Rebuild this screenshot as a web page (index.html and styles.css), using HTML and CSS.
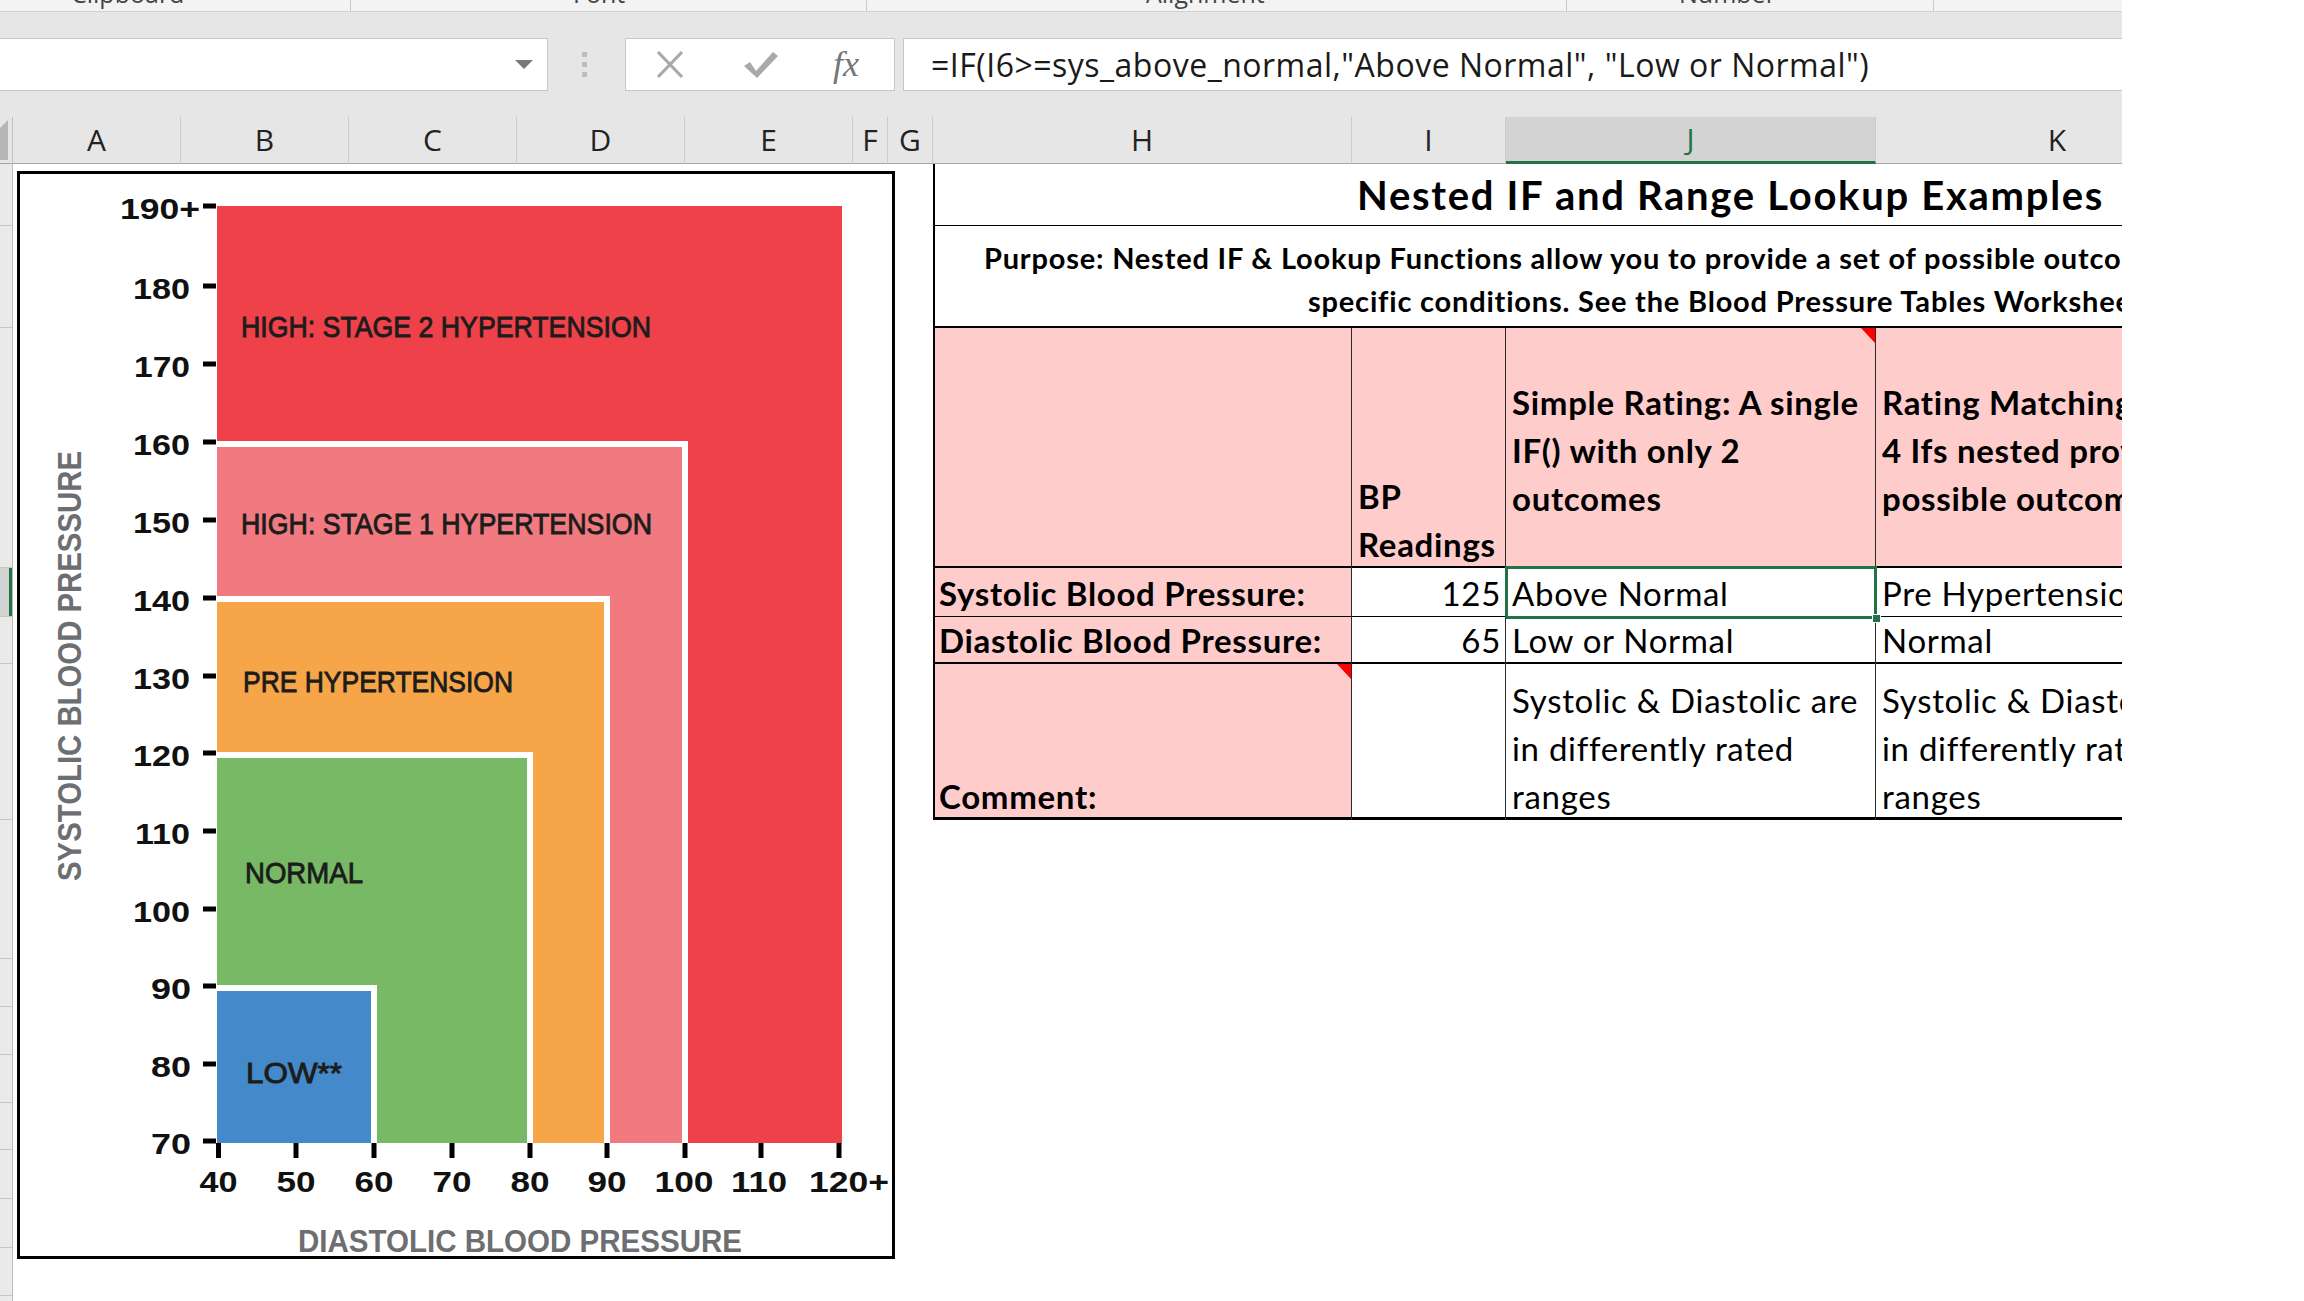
FILE: index.html
```html
<!DOCTYPE html>
<html lang="en">
<head>
<meta charset="utf-8">
<title>Nested IF and Range Lookup Examples</title>
<link rel="stylesheet" href="styles.css">
</head>
<body>
<div class="app">
  <div class="ribbon">
    <div class="rgroup rg1"><span class="rlabel">Clipboard</span></div>
    <div class="rgroup rg2"><span class="rlabel">Font</span></div>
    <div class="rgroup rg3"><span class="rlabel">Alignment</span></div>
    <div class="rgroup rg4"><span class="rlabel">Number</span></div>
  </div>

  <div class="fbar">
    <div class="namebox">
      <svg class="ddarrow" width="18" height="9" viewBox="0 0 18 9"><polygon points="0,0 18,0 9,9" fill="#7a7a7a"/></svg>
    </div>
    <svg class="vdots" width="8" height="53" viewBox="0 0 8 53"><rect x="1" y="14" width="5" height="5" fill="#bdbdbd"/><rect x="1" y="24" width="5" height="5" fill="#bdbdbd"/><rect x="1" y="34" width="5" height="5" fill="#bdbdbd"/></svg>
    <div class="fxbtns">
      <svg width="268" height="51" viewBox="0 0 268 51">
        <path d="M32 13 L56 38 M56 13 L32 38" stroke="#a9a9a9" stroke-width="3.2" fill="none"/>
        <path d="M118 27 L124 23 L130 32 L147 13 L152 17 L131 39 Z" fill="#a9a9a9"/>
        <text x="207" y="37" class="fxtext">fx</text>
      </svg>
    </div>
    <div class="formula">=IF(I6&gt;=sys_above_normal,"Above Normal", "Low or Normal")</div>
  </div>

  <div class="colhead">
    <div class="corner">
      <svg width="12" height="47" viewBox="0 0 12 47"><polygon points="0,11 8,3 8,43 0,43" fill="#b6b6b6"/></svg>
    </div>
    <div class="col w-a">A</div>
    <div class="col w-a">B</div>
    <div class="col w-a">C</div>
    <div class="col w-a">D</div>
    <div class="col w-a">E</div>
    <div class="col w-f">F</div>
    <div class="col w-g">G</div>
    <div class="col w-h">H</div>
    <div class="col w-i">I</div>
    <div class="col w-j active">J</div>
    <div class="col w-k">K</div>
  </div>

  <div class="body">
    <div class="rowhead">
      <div class="rh r62"></div>
      <div class="rh r102"></div>
      <div class="rh r240"></div>
      <div class="rh r49 rsel"></div>
      <div class="rh r47"></div>
      <div class="rh r156"></div>
      <div class="rh r139"></div>
      <div class="rh r48"></div>
      <div class="rh r48"></div>
      <div class="rh r48"></div>
      <div class="rh r47"></div>
      <div class="rh r49"></div>
      <div class="rh r49"></div>
      <div class="rh r48"></div>
      <div class="rh r48"></div>
    </div>

    <div class="grid">
      <div class="spacer"></div>

      <div class="table">
        <div class="c title b1">Nested IF and Range Lookup Examples</div>
        <div class="c purpose b2">
          <span class="pl1">Purpose: Nested IF &amp; Lookup Functions allow you to provide a set of possible outcomes based on</span>
          <span class="pl2">specific conditions. See the Blood Pressure Tables Worksheet for details.</span>
        </div>

        <div class="c h pink vr b2"></div>
        <div class="c pink vr b2 bold">BP<br>Readings</div>
        <div class="c pink vr b2 bold mid cmt">Simple Rating: A single<br>IF() with only 2<br>outcomes</div>
        <div class="c pink b2 bold mid">Rating Matching<br>4 Ifs nested provide 5<br>possible outcomes</div>

        <div class="c h pink vr b1 bold">Systolic Blood Pressure:</div>
        <div class="c vr b1 num">125</div>
        <div class="c vr b1 selcell">Above Normal<span class="handle"></span></div>
        <div class="c b1">Pre Hypertension</div>

        <div class="c h pink vr b2 bold">Diastolic Blood Pressure:</div>
        <div class="c vr b2 num">65</div>
        <div class="c vr b2">Low or Normal</div>
        <div class="c b2">Normal</div>

        <div class="c h pink vr b3 bold cmt">Comment:</div>
        <div class="c vr b3"></div>
        <div class="c vr b3">Systolic &amp; Diastolic are<br>in differently rated<br>ranges</div>
        <div class="c b3">Systolic &amp; Diastolic are<br>in differently rated<br>ranges</div>
      </div>

      <div class="chart">
        <svg width="872" height="1082" viewBox="20 174 872 1082">
          <rect x="217" y="206" width="625" height="937" fill="#ee414a"/>

          <rect x="217" y="441" width="468" height="702" fill="#f07a7f"/>
          <rect x="217" y="441" width="471" height="6" fill="#fff"/>
          <rect x="682" y="441" width="6" height="702" fill="#fff"/>

          <rect x="217" y="596" width="390" height="547" fill="#f6a649"/>
          <rect x="217" y="596" width="393" height="6" fill="#fff"/>
          <rect x="604" y="596" width="6" height="547" fill="#fff"/>

          <rect x="217" y="752" width="313" height="391" fill="#77b964"/>
          <rect x="217" y="752" width="316" height="6" fill="#fff"/>
          <rect x="527" y="752" width="6" height="391" fill="#fff"/>

          <rect x="217" y="985" width="157" height="158" fill="#4489c9"/>
          <rect x="217" y="985" width="160" height="6" fill="#fff"/>
          <rect x="371" y="985" width="6" height="158" fill="#fff"/>

          <g class="zone">
            <text x="241" y="337" textLength="410" lengthAdjust="spacingAndGlyphs">HIGH: STAGE 2 HYPERTENSION</text>
            <text x="241" y="534" textLength="411" lengthAdjust="spacingAndGlyphs">HIGH: STAGE 1 HYPERTENSION</text>
            <text x="243" y="692" textLength="270" lengthAdjust="spacingAndGlyphs">PRE HYPERTENSION</text>
            <text x="245" y="883" textLength="118" lengthAdjust="spacingAndGlyphs">NORMAL</text>
            <text x="246" y="1083" textLength="96" lengthAdjust="spacingAndGlyphs">LOW**</text>
          </g>

          <g fill="#000">
            <rect x="203" y="203.5" width="13" height="5"/>
            <rect x="203" y="283.5" width="13" height="5"/>
            <rect x="203" y="361.5" width="13" height="5"/>
            <rect x="203" y="439.5" width="13" height="5"/>
            <rect x="203" y="517.5" width="13" height="5"/>
            <rect x="203" y="595.5" width="13" height="5"/>
            <rect x="203" y="673.5" width="13" height="5"/>
            <rect x="203" y="750.5" width="13" height="5"/>
            <rect x="203" y="828.5" width="13" height="5"/>
            <rect x="203" y="906.5" width="13" height="5"/>
            <rect x="203" y="983.5" width="13" height="5"/>
            <rect x="203" y="1061.5" width="13" height="5"/>
            <rect x="203" y="1138.5" width="13" height="5"/>

            <rect x="216" y="1143" width="5" height="15"/>
            <rect x="293.5" y="1143" width="5" height="15"/>
            <rect x="371.5" y="1143" width="5" height="15"/>
            <rect x="449.5" y="1143" width="5" height="15"/>
            <rect x="527.5" y="1143" width="5" height="15"/>
            <rect x="604.5" y="1143" width="5" height="15"/>
            <rect x="682.5" y="1143" width="5" height="15"/>
            <rect x="758.5" y="1143" width="5" height="15"/>
            <rect x="836.5" y="1143" width="5" height="15"/>
          </g>

          <g class="ylab">
            <text x="200" y="219" textLength="80" lengthAdjust="spacingAndGlyphs">190+</text>
            <text x="190" y="299" textLength="57" lengthAdjust="spacingAndGlyphs">180</text>
            <text x="190" y="377" textLength="56" lengthAdjust="spacingAndGlyphs">170</text>
            <text x="190" y="455" textLength="57" lengthAdjust="spacingAndGlyphs">160</text>
            <text x="190" y="533" textLength="57" lengthAdjust="spacingAndGlyphs">150</text>
            <text x="190" y="611" textLength="57" lengthAdjust="spacingAndGlyphs">140</text>
            <text x="190" y="689" textLength="57" lengthAdjust="spacingAndGlyphs">130</text>
            <text x="190" y="766" textLength="57" lengthAdjust="spacingAndGlyphs">120</text>
            <text x="190" y="844" textLength="55" lengthAdjust="spacingAndGlyphs">110</text>
            <text x="190" y="922" textLength="57" lengthAdjust="spacingAndGlyphs">100</text>
            <text x="191" y="999" textLength="40" lengthAdjust="spacingAndGlyphs">90</text>
            <text x="191" y="1077" textLength="40" lengthAdjust="spacingAndGlyphs">80</text>
            <text x="191" y="1154" textLength="40" lengthAdjust="spacingAndGlyphs">70</text>
          </g>

          <g class="xlab">
            <text x="218.5" y="1192" textLength="38" lengthAdjust="spacingAndGlyphs">40</text>
            <text x="296" y="1192" textLength="39" lengthAdjust="spacingAndGlyphs">50</text>
            <text x="374" y="1192" textLength="39" lengthAdjust="spacingAndGlyphs">60</text>
            <text x="452" y="1192" textLength="39" lengthAdjust="spacingAndGlyphs">70</text>
            <text x="530" y="1192" textLength="39" lengthAdjust="spacingAndGlyphs">80</text>
            <text x="607" y="1192" textLength="39" lengthAdjust="spacingAndGlyphs">90</text>
            <text x="684" y="1192" textLength="59" lengthAdjust="spacingAndGlyphs">100</text>
            <text x="759" y="1192" textLength="56" lengthAdjust="spacingAndGlyphs">110</text>
          </g>
          <text class="xlab-start" x="809" y="1192" textLength="80" lengthAdjust="spacingAndGlyphs">120+</text>

          <text class="axis" x="298" y="1252" textLength="444" lengthAdjust="spacingAndGlyphs">DIASTOLIC BLOOD PRESSURE</text>
          <text class="axis axis-v" x="-881" y="81" transform="rotate(-90)" textLength="430" lengthAdjust="spacingAndGlyphs">SYSTOLIC BLOOD PRESSURE</text>
        </svg>
      </div>
    </div>
  </div>
</div>
</body>
</html>
```

FILE: styles.css
```css
* { box-sizing: border-box; }
html, body { margin: 0; padding: 0; background: #ffffff; }
body { width: 2304px; height: 1301px; overflow: hidden; font-family: "Open Sans", "Liberation Sans", sans-serif; }

.app { width: 2122px; height: 1301px; overflow: hidden; background: #ffffff; }

/* ribbon remnants */
.ribbon { height: 12px; background: #f3f3f3; border-bottom: 1px solid #d1d1d1; display: flex; overflow: hidden; }
.rgroup { height: 11px; flex: none; overflow: hidden; border-right: 1px solid #c9c9c9; }
.rg1 { width: 351px; padding-left: 71px; }
.rg2 { width: 516px; padding-left: 222px; }
.rg3 { width: 700px; padding-left: 279px; }
.rg4 { width: 367px; padding-left: 112px; }
.rlabel { display: block; font-size: 25px; line-height: 25px; margin-top: -19px; color: #444; white-space: nowrap; }

/* formula bar */
.fbar { height: 105px; background: #e6e6e6; display: flex; align-items: flex-start; padding-top: 26px; }
.namebox { width: 548px; height: 53px; flex: none; background: #ffffff; border: 1px solid #c6c6c6; border-left: 0; display: flex; align-items: center; justify-content: flex-end; padding-right: 14px; }
.ddarrow { display: block; }
.vdots { display: block; flex: none; margin-left: 33px; }
.fxbtns { width: 270px; height: 53px; flex: none; margin-left: 36px; background: #ffffff; border: 1px solid #c6c6c6; }
.fxbtns svg { display: block; }
.fxtext { font-family: "Liberation Serif", serif; font-style: italic; font-size: 36px; fill: #767676; }
.formula { flex: 1; height: 53px; margin-left: 8px; background: #ffffff; border: 1px solid #c6c6c6; border-right: 0; padding-left: 27px; font-size: 32px; letter-spacing: 0.5px; line-height: 52px; color: #1a1a1a; white-space: nowrap; overflow: hidden; }

/* column header */
.colhead { height: 47px; background: #e6e6e6; display: flex; }
.corner { width: 13px; flex: none; border-right: 1px solid #c0c0c0; border-bottom: 1px solid #a6a6a6; }
.corner svg { display: block; }
.col { flex: none; height: 47px; border-right: 1px solid #cbcbcb; border-bottom: 1px solid #a6a6a6; text-align: center; font-size: 30px; line-height: 46px; color: #222; }
.w-a { width: 168px; }
.w-f { width: 35px; }
.w-g { width: 45px; }
.w-h { width: 419px; }
.w-i { width: 154px; }
.w-j { width: 370px; }
.w-k { width: 362px; border-right: 0; }
.col.active { background: #d3d3d3; color: #217346; border-bottom: 3px solid #217346; line-height: 44px; }

/* body */
.body { display: flex; height: 1137px; }
.rowhead { width: 13px; flex: none; background: #eaeaea; border-right: 1px solid #bdbdbd; }
.rh { border-bottom: 1px solid #c6c6c6; }
.r62 { height: 62px; }
.r102 { height: 102px; }
.r240 { height: 240px; }
.r49 { height: 49px; }
.r47 { height: 47px; }
.r48 { height: 48px; }
.r156 { height: 156px; }
.r139 { height: 139px; }
.rsel { background: #d3d3d3; box-shadow: inset -3px 0 0 #217346; }

.grid { flex: 1; position: relative; display: flex; align-items: flex-start; }
.spacer { width: 920px; flex: none; }

/* data table */
.table { flex: none; display: grid; grid-template-columns: 419px 154px 370px 362px; grid-template-rows: 62px 102px 240px 49px 47px 156px; font-family: Lato, "Open Sans", sans-serif; font-size: 33px; letter-spacing: 0.7px; line-height: 48px; color: #000; }
.c { position: relative; display: flex; flex-direction: column; justify-content: flex-end; padding: 0 6px; white-space: nowrap; }
.h { border-left: 2px solid #000; padding-left: 4px; }
.vr { border-right: 1px solid #2b2b2b; }
.pink { background: #ffcccc; }
.b1 { box-shadow: inset 0 -1px 0 #000; }
.b2 { box-shadow: inset 0 -2px 0 #000; }
.b3 { box-shadow: inset 0 -3px 0 #000; }
.bold { font-weight: 700; }
.mid { justify-content: center; padding-top: 4px; }
.num { text-align: right; padding-right: 4px; }

.title { grid-column: 1 / -1; border-left: 2px solid #000; justify-content: flex-start; padding-left: 422px; font-weight: 700; font-size: 40px; letter-spacing: 1.7px; line-height: 62px; }
.purpose { grid-column: 1 / -1; border-left: 2px solid #000; justify-content: flex-start; padding: 10px 0 0 0; font-weight: 700; font-size: 29px; letter-spacing: 0.8px; line-height: 43px; }
.pl1 { display: block; padding-left: 49px; }
.pl2 { display: block; padding-left: 373px; }

.cmt::before { content: ""; position: absolute; top: 0; right: 0; width: 14px; height: 15px; background: #ff0000; clip-path: polygon(0 0, 100% 0, 100% 100%); }

.selcell::after { content: ""; position: absolute; left: -1px; top: -2px; right: -2px; bottom: -2px; border: 3px solid #217346; }
.handle { position: absolute; right: -6px; bottom: -6px; width: 9px; height: 9px; background: #217346; border: 1px solid #ffffff; z-index: 2; }

/* floating chart picture */
.chart { position: absolute; left: 4px; top: 7px; width: 878px; height: 1088px; border: 3px solid #000; background: #fff; }
.chart svg { display: block; }
.zone text { font-family: "Liberation Sans", sans-serif; font-size: 30px; fill: #1c1c1c; stroke: #1c1c1c; stroke-width: 0.9px; }
.ylab text { font-family: "Liberation Sans", sans-serif; font-weight: 700; font-size: 29px; fill: #111; text-anchor: end; }
.xlab text { font-family: "Liberation Sans", sans-serif; font-weight: 700; font-size: 29px; fill: #111; text-anchor: middle; }
.xlab-start { font-family: "Liberation Sans", sans-serif; font-weight: 700; font-size: 29px; fill: #111; }
.axis { font-family: "Liberation Sans", sans-serif; font-weight: 700; font-size: 32px; fill: #6d6e71; }
.axis-v { font-size: 34px; }
```
